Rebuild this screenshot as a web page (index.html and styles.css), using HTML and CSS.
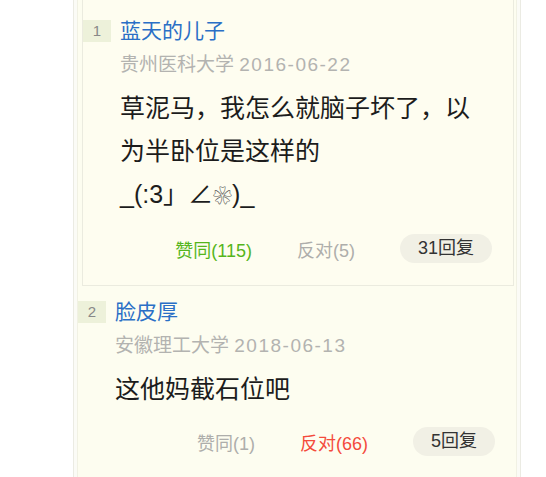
FILE: index.html
```html
<!DOCTYPE html>
<html lang="zh-CN">
<head>
    <meta charset="UTF-8">
    <meta name="viewport" content="width=device-width, initial-scale=1.0">
    <title>评论</title>
    <link rel="stylesheet" href="styles.css">
</head>
<body>
    <div class="column">
        <div class="column-inner">
            <div class="comment comment-hot">
                <div class="comment-head">
                    <span class="floor">1</span>
                    <a class="author" href="#">蓝天的儿子</a>
                </div>
                <div class="comment-body">
                    <p class="meta">贵州医科大学 <span class="date">2016-06-22</span></p>
                    <p class="text">草泥马，我怎么就脑子坏了，以为半卧位是这样的<br>_(:3」∠<span class="flower">❀</span>)_</p>
                    <div class="actions">
                        <span class="vote vote-up active">赞同(115)</span>
                        <span class="vote vote-down">反对(5)</span>
                        <span class="reply">31回复</span>
                    </div>
                </div>
            </div>

            <div class="comment">
                <div class="comment-head">
                    <span class="floor">2</span>
                    <a class="author" href="#">脸皮厚</a>
                </div>
                <div class="comment-body">
                    <p class="meta">安徽理工大学 <span class="date">2018-06-13</span></p>
                    <p class="text">这他妈截石位吧</p>
                    <div class="actions">
                        <span class="vote vote-up">赞同(1)</span>
                        <span class="vote vote-down active">反对(66)</span>
                        <span class="reply">5回复</span>
                    </div>
                </div>
            </div>
        </div>
    </div>
</body>
</html>
```

FILE: styles.css
```css
html, body {
    margin: 0;
    padding: 0;
    height: 100%;
    overflow: hidden;
    background-color: #fff;
}
body {
    font-family: "Liberation Sans", "Noto Sans CJK SC", sans-serif;
    color: #222;
}
p {
    margin: 0;
}
.column {
    width: 448px;
    height: 100%;
    margin-left: 73px;
    padding: 0 3px;
    border-left: 1px solid #ebebe3;
    border-right: 1px solid #ebebe3;
    box-sizing: border-box;
    background-color: #fbfbf6;
}
.column-inner {
    display: flow-root;
    height: 100%;
    border-left: 1px solid #f1f1e4;
    border-right: 1px solid #f1f1e4;
    background-color: #fdfdf0;
}
.comment {
    padding: 11px 21px 22px 0;
}
.comment-hot {
    margin: -10px 2px 0 4px;
    padding-top: 25px;
    border: 1px solid #ebebdf;
    background-color: #fefdf0;
}
.comment-head {
    display: flex;
    align-items: center;
    height: 30px;
}
.floor {
    width: 28px;
    height: 22px;
    line-height: 22px;
    margin-right: 9px;
    text-align: center;
    font-size: 15px;
    color: #888;
    background-color: #edf1da;
}
.author {
    font-size: 21px;
    line-height: 30px;
    color: #2a6fc6;
    text-decoration: none;
}
.comment-body {
    padding-left: 37px;
}
.meta {
    margin-top: 4px;
    font-size: 19px;
    line-height: 30px;
    color: #b3b3b0;
}
.date {
    letter-spacing: 1.5px;
}
.text {
    margin-top: 7px;
    font-size: 25px;
    line-height: 43px;
    color: #1c1c1c;
}
.flower {
    font-size: 19px;
    color: #555;
}
.actions {
    display: flex;
    justify-content: flex-end;
    align-items: center;
    gap: 45px;
    margin-top: 16px;
    font-size: 18px;
}
.vote {
    color: #aeaeab;
}
.vote-up.active {
    color: #55b51c;
}
.vote-down.active {
    color: #f44b3c;
}
.reply {
    height: 29px;
    line-height: 29px;
    padding: 0 18px;
    border-radius: 15px;
    color: #333;
    background-color: #f1f0e5;
}
```
